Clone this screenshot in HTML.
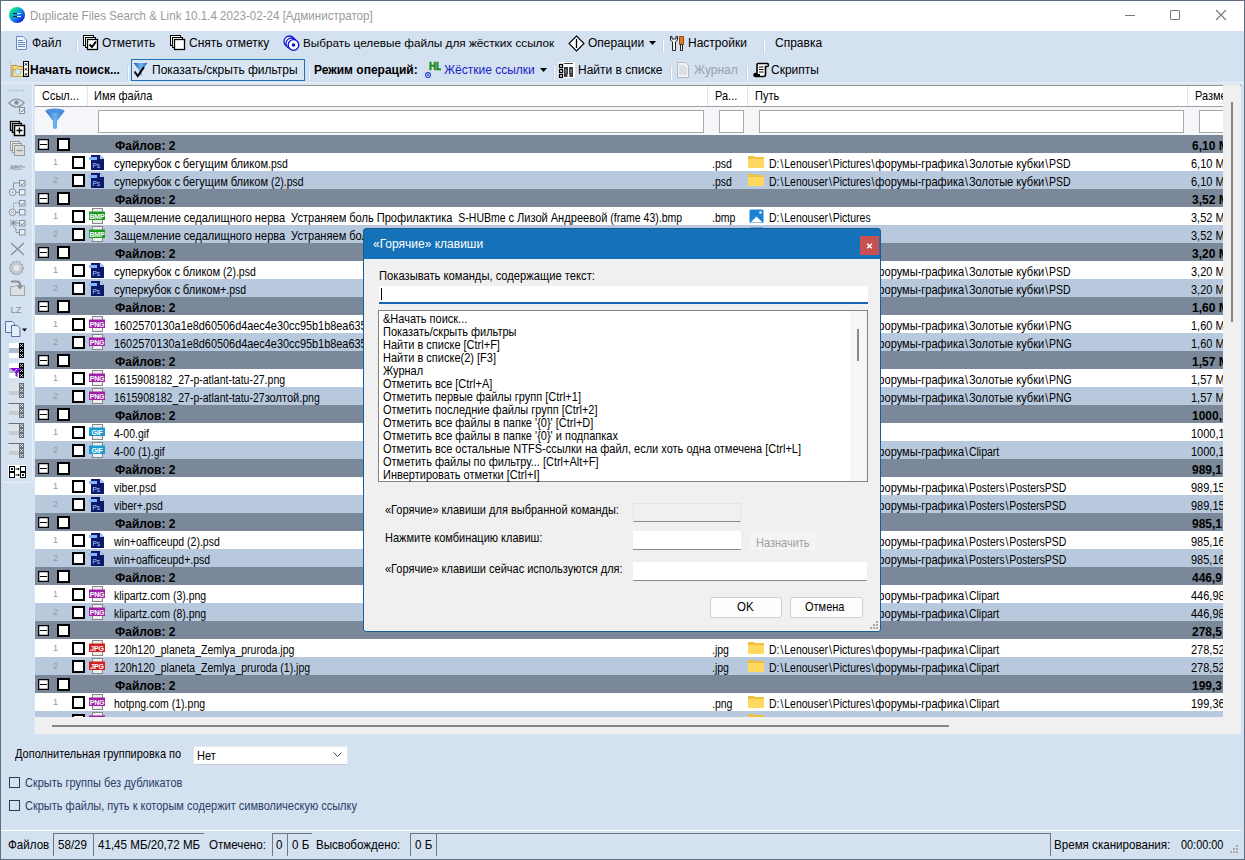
<!DOCTYPE html><html><head><meta charset="utf-8"><style>
*{box-sizing:border-box;margin:0;padding:0}
html,body{width:1245px;height:860px;overflow:hidden}
body{position:relative;background:#d4e1f0;font-family:"Liberation Sans",sans-serif;font-size:12px;color:#000}
.a{position:absolute;white-space:nowrap}
.t{position:absolute;white-space:nowrap;line-height:14px}
.vs{position:absolute;width:2px;height:14px;margin-top:4px;border-left:1px solid #c8d4e0;border-right:1px solid #f8fbff}
.row{position:absolute;left:35px;width:1188px;height:18px;overflow:hidden}
.g{background:#7b8899}
.w{background:#fff}
.b{background:#b8c9de}
.cb{position:absolute;width:13px;height:13px;border:2px solid #000;background:#fff}
.col{position:absolute;top:1px;width:11px;height:11px;border:1px solid #000;box-shadow:inset 0 0 0 .3px #000;background:#fff}
.col:after{content:"";position:absolute;left:1px;top:3.5px;width:7px;height:1.6px;background:#000}
.rt{position:absolute;top:4px;line-height:14px;font-size:11px;white-space:pre;transform:scaleY(1.13);transform-origin:0 10.8px}
.gt{position:absolute;top:4px;line-height:14px;font-size:12px;font-weight:bold;white-space:nowrap}
.num{position:absolute;left:18px;top:3px;font-size:9px;color:#999;line-height:12px}
.fi{position:absolute;left:54px;top:1px;width:16px;height:16px}
.fo{position:absolute;left:713px;top:1px;width:16px;height:16px}
.dl{position:absolute;white-space:nowrap;line-height:13px;font-size:11px;transform:scaleY(1.13);transform-origin:0 10.3px}
</style></head><body>
<div class="a" style="left:0;top:0;width:1245px;height:31px;background:#fff"></div>
<div class="a" style="left:9px;top:7px;width:16px;height:16px;border-radius:50%;background:linear-gradient(135deg,#00f080 15%,#1890e0 50%,#1020e0 85%)"></div>
<div class="a" style="left:13px;top:13px;width:4px;height:1px;background:#123"></div><div class="a" style="left:13px;top:16px;width:4px;height:1px;background:#123"></div><div class="a" style="left:17px;top:13px;width:4px;height:1px;background:#cff"></div><div class="a" style="left:17px;top:16px;width:4px;height:1px;background:#cff"></div>
<div class="t" style="left:30px;top:8.7px;color:#9a9a9a;font-size:11.6px;transform:scaleY(1.15);transform-origin:0 11px">Duplicate Files Search &amp; Link 10.1.4 2023-02-24 [Администратор]</div>
<div class="a" style="left:1125px;top:15px;width:10px;height:1px;background:#777"></div>
<div class="a" style="left:1170px;top:10px;width:10px;height:10px;border:1px solid #777;border-radius:1px"></div>
<svg class="a" style="left:1215px;top:9px" width="12" height="12"><path d="M1 1L11 11M11 1L1 11" stroke="#777" stroke-width="1.1"/></svg>
<svg class="a" style="left:15px;top:36px" width="12" height="14" viewBox="0 0 12 14"><path d="M1.5 .5H8L11.5 4V13.5H1.5Z" fill="#eef4fc" stroke="#6a88c8"/><path d="M3 4.5H8M3 6.5H10M3 8.5H10M3 10.5H10" stroke="#6a88c8"/></svg>
<div class="t" style="left:32px;top:36px">Файл</div>
<div class="vs" style="left:76px;top:35px"></div>
<svg class="a" style="left:83px;top:35px" width="16" height="16" viewBox="0 0 16 16"><rect x="0.5" y="0.5" width="10" height="10" fill="#fff" stroke="#000"/><rect x="2.5" y="2.5" width="10" height="10" fill="#fff" stroke="#000"/><rect x="4.5" y="4.5" width="10" height="10" fill="#fff" stroke="#000" stroke-width="1.3"/><path d="M6.5 9.5L9 12L13 6.5" stroke="#000" stroke-width="2" fill="none"/></svg>
<div class="t" style="left:102px;top:36px">Отметить</div>
<svg class="a" style="left:170px;top:35px" width="16" height="16" viewBox="0 0 16 16"><rect x="0.5" y="0.5" width="10" height="10" fill="#fff" stroke="#000"/><rect x="2.5" y="2.5" width="10" height="10" fill="#fff" stroke="#000"/><rect x="4.5" y="4.5" width="10" height="10" fill="#fff" stroke="#000" stroke-width="1.3"/></svg>
<div class="t" style="left:189px;top:36px">Снять отметку</div>
<svg class="a" style="left:283px;top:35px" width="18" height="17" viewBox="0 0 18 17"><circle cx="6.5" cy="6.5" r="5.5" fill="#fff" stroke="#0a14d0" stroke-width="1.3"/><circle cx="8.5" cy="8.5" r="5.5" fill="#fff" stroke="#0a14d0" stroke-width="1.3"/><circle cx="10.5" cy="10" r="5.3" fill="#fff" stroke="#0a14d0" stroke-width="1.3"/><circle cx="10.5" cy="10" r="1.8" fill="#0a14d0"/></svg>
<div class="t" style="left:303px;top:36px;font-size:11.75px">Выбрать целевые файлы для жёстких ссылок</div>
<svg class="a" style="left:568px;top:35px" width="17" height="17" viewBox="0 0 17 17"><path d="M8.5 1L16 8.5L8.5 16L1 8.5Z" fill="#fff" stroke="#000" stroke-width="1.1"/><path d="M8.5 4V13" stroke="#000" stroke-width="1.3"/></svg>
<div class="t" style="left:588px;top:36px">Операции</div>
<svg class="a" style="left:649px;top:41px" width="7" height="4" viewBox="0 0 7 4"><path d="M0 0H7L3.5 4Z" fill="#000"/></svg>
<div class="vs" style="left:662px;top:35px"></div>
<svg class="a" style="left:669px;top:35px" width="16" height="17" viewBox="0 0 16 17"><path d="M1.5 1.5V5L3.5 7V15.5H6.5V7L8.5 5V1.5H7V4H3V1.5Z" fill="#f2f2f2" stroke="#222"/><path d="M10.5 1.5H14.5V9.5H10.5Z" fill="#e07a20" stroke="#8a4a10"/><path d="M11.5 9.5H13.5V15.5H11.5Z" fill="#f4f4f4" stroke="#222"/></svg>
<div class="t" style="left:688px;top:36px">Настройки</div>
<div class="vs" style="left:763px;top:35px"></div>
<div class="t" style="left:775px;top:36px">Справка</div>
<div class="a" style="left:10px;top:62px;width:1px;height:16px;background:#b4c2d2"></div>
<svg class="a" style="left:11px;top:61px" width="18" height="17" viewBox="0 0 18 17"><path d="M1 4.5H6L7 5.5H13V15.5H1Z" fill="#f4d878" stroke="#b89028"/><path d="M2.5 8.5H13.5L12.5 15.5H1.5Z" fill="#f8e8a8" stroke="#c8a040"/><circle cx="7" cy="11" r="3" fill="#d0ecf8" stroke="#90b8d0" stroke-width=".7"/><rect x="12.5" y=".5" width="5" height="15" fill="#fff" stroke="#000"/><path d="M13.8 2.2l2.4 2.4m0-2.4l-2.4 2.4M13.8 7.2l2.4 2.4m0-2.4l-2.4 2.4M13.8 12.2l2.4 2.4m0-2.4l-2.4 2.4" stroke="#000" stroke-width=".9"/></svg>
<div class="t" style="left:30px;top:63px;font-weight:bold">Начать поиск...</div>
<div class="vs" style="left:127px;top:62px"></div>
<div class="a" style="left:131px;top:59px;width:174px;height:22px;border:1px solid #2070b8;background:#d9e7f5"></div>
<svg class="a" style="left:133px;top:62px" width="15" height="16" viewBox="0 0 15 16"><defs><linearGradient id="tg" x1="0" y1="0" x2="1" y2="0"><stop offset="0" stop-color="#1a58b8"/><stop offset=".55" stop-color="#7ab8f0"/><stop offset="1" stop-color="#1a58b8"/></linearGradient></defs><path d="M.5 1H14.5L9 8V14L6 12.5V8Z" fill="url(#tg)"/><path d="M1.5 9.5L4.8 14L11 5" stroke="#000" stroke-width="2" fill="none"/></svg>
<div class="t" style="left:152px;top:63px">Показать/скрыть фильтры</div>
<div class="vs" style="left:308px;top:62px"></div>
<div class="t" style="left:314px;top:63px;font-weight:bold">Режим операций:</div>
<svg class="a" style="left:425px;top:61px" width="16" height="17" viewBox="0 0 16 17"><text x="4" y="9" font-family="Liberation Sans" font-size="10" font-weight="bold" fill="#188a18" stroke="#188a18" stroke-width=".5" letter-spacing="-.3">HL</text><circle cx="3" cy="14" r="2.4" fill="#fff" stroke="#1a3ad0" stroke-width="1.1"/><circle cx="3" cy="14" r="1" fill="#1a3ad0"/></svg>
<div class="t" style="left:444px;top:63px;color:#1a22c8">Жёсткие ссылки</div>
<svg class="a" style="left:540px;top:68px" width="7" height="4" viewBox="0 0 7 4"><path d="M0 0H7L3.5 4Z" fill="#000"/></svg>
<div class="vs" style="left:553px;top:62px"></div>
<svg class="a" style="left:558px;top:62px" width="17" height="16" viewBox="0 0 17 16"><rect x="0" y="0" width="17" height="16" fill="#fff"/><rect x="1.5" y="2.5" width="3" height="3" fill="#fff" stroke="#000" stroke-width="1.3"/><rect x="1.5" y="7.5" width="3" height="3" fill="#fff" stroke="#000" stroke-width="1.3"/><rect x="1.5" y="12.5" width="3" height="3" fill="#fff" stroke="#000" stroke-width="1.3"/><path d="M6 1.5H15" stroke="#444"/><path d="M6 5H10V15H6ZM11 5H15V15H11Z" fill="#3a3e42"/><path d="M7 7H9V11H7ZM12 7H14V11H12Z" fill="#6a7074"/><path d="M9.5 12H11.5V15H9.5Z" fill="#fff"/></svg>
<div class="t" style="left:578px;top:63px">Найти в списке</div>
<div class="vs" style="left:670px;top:62px"></div>
<svg class="a" style="left:677px;top:62px" width="12" height="16" viewBox="0 0 12 16"><path d="M.5 .5H8.5L11.5 3.5V15.5H.5Z" fill="#f2f4f6" stroke="#b4b8bc"/><path d="M2 4H8M2 6H10M2 8H10M2 10H10M2 12H10" stroke="#c4c8cc"/></svg>
<div class="t" style="left:694px;top:63px;color:#9aa0a8">Журнал</div>
<div class="vs" style="left:746px;top:62px"></div>
<svg class="a" style="left:753px;top:62px" width="16" height="16" viewBox="0 0 16 16"><path d="M5 1.5H14Q15.5 1.5 15.5 3Q15.5 4.5 14 4.5H12.5V12.5Q12.5 14.5 10.5 14.5H2.5Q1 14.5 1 13Q1 11.5 2.5 11.5H4V3Q4 1.5 5 1.5Z" fill="#fff" stroke="#000" stroke-width="1.6"/><path d="M6 5H10.5M6 7.5H10.5M6 10H10.5" stroke="#000"/><path d="M1.5 13H7" stroke="#000" stroke-width="2"/></svg>
<div class="t" style="left:771px;top:63px">Скрипты</div>
<div class="a" style="left:1px;top:82px;width:1243px;height:1px;background:#e6f0fb"></div>
<div class="a" style="left:1px;top:83px;width:1243px;height:2px;background:#dce4ee"></div>
<svg class="a" style="left:0;top:0" width="34" height="500" viewBox="0 0 34 500"><path d="M7.5 90.5h1M10.5 90.5h1M13.5 90.5h1M16.5 90.5h1M19.5 90.5h1M22.5 90.5h1" stroke="#9aa6b4" stroke-width="1.5"/><path d="M9 103Q16.5 95 24 103Q16.5 111 9 103Z" fill="none" stroke="#8a8f96" stroke-width="1.2"/><circle cx="16.5" cy="102.5" r="2.2" fill="#8a8f96"/><rect x="19.5" y="107.5" width="5" height="6" fill="#e8eef4" stroke="#8a8f96"/><path d="M20.5 110.5l1.5 1.5l2-3" stroke="#8a8f96" fill="none"/><rect x="10.5" y="121.5" width="9" height="9" fill="#fff" stroke="#000" stroke-width="1.3"/><rect x="12.5" y="123.5" width="9" height="9" fill="#fff" stroke="#000" stroke-width="1.3"/><rect x="14.5" y="125.5" width="10" height="10" fill="#fff" stroke="#000" stroke-width="1.5"/><path d="M16.5 130.5h6M19.5 127.5v6" stroke="#000" stroke-width="1.4"/><rect x="10.5" y="141.5" width="9" height="9" fill="#eee" stroke="#999"/><rect x="12.5" y="143.5" width="9" height="9" fill="#e6e6e6" stroke="#999"/><rect x="14.5" y="145.5" width="10" height="10" fill="#ddd" stroke="#999"/><path d="M16.5 150.5h6" stroke="#999" stroke-width="1.4"/><text x="10" y="169.5" font-family="Liberation Sans" font-size="6.5" fill="#8a8f96" letter-spacing="-.3">ABC</text><path d="M10 167h15" stroke="#8a8f96" stroke-width=".8"/><rect x="19.5" y="180.5" width="5.5" height="5.5" fill="#e8eef4" stroke="#8a8f96"/><path d="M20.5 183.5l1.5 1.5l2.5-3" stroke="#8a8f96" fill="none"/><rect x="19.5" y="189.5" width="5.5" height="5.5" fill="#e8eef4" stroke="#8a8f96"/><path d="M19 183.0H13.5V188.5" stroke="#8a8f96" fill="none"/><circle cx="12.5" cy="192.3" r="3.3" fill="#e8eef4" stroke="#8a8f96"/><circle cx="12.5" cy="192.3" r="1" fill="#8a8f96"/><path d="M16 192.3H19" stroke="#8a8f96"/><rect x="19.5" y="200.5" width="5.5" height="5.5" fill="#e8eef4" stroke="#8a8f96"/><path d="M20.5 203.5l1.5 1.5l2.5-3" stroke="#8a8f96" fill="none"/><rect x="19.5" y="209.5" width="5.5" height="5.5" fill="#e8eef4" stroke="#8a8f96"/><path d="M19 203.0H13.5V208.5" stroke="#8a8f96" stroke-dasharray="1.5 1" fill="none"/><circle cx="12.5" cy="212.3" r="3.3" fill="#e8eef4" stroke="#8a8f96"/><path d="M11.5 211.3l2 2m0-2l-2 2" stroke="#8a8f96"/><path d="M16 212.3H19" stroke="#8a8f96"/><rect x="19.5" y="220.5" width="5.5" height="5.5" fill="#e8eef4" stroke="#8a8f96"/><path d="M20.5 223.5l1.5 1.5l2.5-3" stroke="#8a8f96" fill="none"/><rect x="19.5" y="229.5" width="5.5" height="5.5" fill="#e8eef4" stroke="#8a8f96"/><path d="M10 220.0L17 226.0M10 226.0L17 220.0M13.5 220.0V226.0M10 223.0H19" stroke="#8a8f96" fill="none"/><path d="M13.5 226.0L16 229.0V232.5H19" stroke="#8a8f96" fill="none"/><path d="M11 243L24 255M24 243L11 255" stroke="#8a8f96" stroke-width="1.3"/><circle cx="16.5" cy="268" r="6.5" fill="#c8ccd0" stroke="#a0a4a8" stroke-dasharray="2 1.2" stroke-width="1.6"/><circle cx="16.5" cy="268" r="3" fill="#e6e8ea"/><path d="M10.5 286.5h4l1 -1h9v10h-14z" fill="#dde0e3" stroke="#a0a4a8"/><path d="M11 281.5h6q3 0 3 3v3" stroke="#8a8f96" stroke-width="2" fill="none"/><path d="M17 286l3 3.5l3-3.5z" fill="#8a8f96"/><text x="10.5" y="312.5" font-family="Liberation Sans" font-size="9.5" fill="#8a8f96">LZ</text><path d="M5.5 321.5h7l2 2v9h-9z" fill="#e4eefa" stroke="#5a70a8"/><path d="M11.5 325.5h6l2.5 2.5v8.5h-8.5z" fill="#e4eefa" stroke="#5a70a8"/><path d="M22 328.5h5l-2.5 3z" fill="#000"/><rect x="9" y="343" width="10" height="5" fill="#fff"/><rect x="9" y="348" width="10" height="5" fill="#b0bcd0"/><rect x="9" y="353" width="10" height="5" fill="#fff"/><rect x="19" y="343" width="5" height="15" fill="#000"/><path d="M20.2 344.2l2.6 2.6m0-2.6l-2.6 2.6" stroke="#fff" stroke-width=".9"/><path d="M20.2 349.2l2.6 2.6m0-2.6l-2.6 2.6" stroke="#fff" stroke-width=".9"/><path d="M20.2 354.2l2.6 2.6m0-2.6l-2.6 2.6" stroke="#fff" stroke-width=".9"/><rect x="9" y="363" width="10" height="5" fill="#fff"/><rect x="9" y="368" width="10" height="5" fill="#b0bcd0"/><rect x="9" y="373" width="10" height="5" fill="#fff"/><rect x="19" y="363" width="5" height="15" fill="#000"/><path d="M20.2 364.2l2.6 2.6m0-2.6l-2.6 2.6" stroke="#fff" stroke-width=".9"/><path d="M20.2 369.2l2.6 2.6m0-2.6l-2.6 2.6" stroke="#fff" stroke-width=".9"/><path d="M20.2 374.2l2.6 2.6m0-2.6l-2.6 2.6" stroke="#fff" stroke-width=".9"/><path d="M10 368H22L17.5 373V377L15.5 376V373Z" fill="#8010d8"/><path d="M14 372l3-3" stroke="#fff" stroke-width=".8"/><rect x="9" y="383" width="10" height="15" fill="#dde3ea"/><rect x="9" y="391" width="10" height="4" fill="#c6ccd4"/><rect x="19" y="383" width="5" height="15" fill="#6a7078"/><path d="M20.2 384.2l2.6 2.6m0-2.6l-2.6 2.6" stroke="#fff" stroke-width=".9"/><path d="M20.2 389.2l2.6 2.6m0-2.6l-2.6 2.6" stroke="#fff" stroke-width=".9"/><path d="M20.2 394.2l2.6 2.6m0-2.6l-2.6 2.6" stroke="#fff" stroke-width=".9"/><rect x="9" y="403" width="10" height="15" fill="#dde3ea"/><rect x="9" y="411" width="10" height="4" fill="#c6ccd4"/><rect x="19" y="403" width="5" height="15" fill="#6a7078"/><path d="M20.2 404.2l2.6 2.6m0-2.6l-2.6 2.6" stroke="#fff" stroke-width=".9"/><path d="M20.2 409.2l2.6 2.6m0-2.6l-2.6 2.6" stroke="#fff" stroke-width=".9"/><path d="M20.2 414.2l2.6 2.6m0-2.6l-2.6 2.6" stroke="#fff" stroke-width=".9"/><path d="M8.5 403.5H24" stroke="#6a7078"/><rect x="9" y="423" width="10" height="15" fill="#dde3ea"/><rect x="9" y="431" width="10" height="4" fill="#c6ccd4"/><rect x="19" y="423" width="5" height="15" fill="#6a7078"/><path d="M20.2 424.2l2.6 2.6m0-2.6l-2.6 2.6" stroke="#fff" stroke-width=".9"/><path d="M20.2 429.2l2.6 2.6m0-2.6l-2.6 2.6" stroke="#fff" stroke-width=".9"/><path d="M20.2 434.2l2.6 2.6m0-2.6l-2.6 2.6" stroke="#fff" stroke-width=".9"/><path d="M8.5 423.5H24" stroke="#6a7078"/><rect x="9" y="443" width="10" height="15" fill="#dde3ea"/><rect x="9" y="451" width="10" height="4" fill="#c6ccd4"/><rect x="19" y="443" width="5" height="15" fill="#6a7078"/><path d="M20.2 444.2l2.6 2.6m0-2.6l-2.6 2.6" stroke="#fff" stroke-width=".9"/><path d="M20.2 449.2l2.6 2.6m0-2.6l-2.6 2.6" stroke="#fff" stroke-width=".9"/><path d="M20.2 454.2l2.6 2.6m0-2.6l-2.6 2.6" stroke="#fff" stroke-width=".9"/><path d="M8.5 443.5H24" stroke="#6a7078"/><rect x="8" y="465" width="18" height="13" fill="#fff"/><rect x="9.5" y="466.5" width="5" height="5" fill="#fff" stroke="#000"/><path d="M11 468l2 2m0-2l-2 2" stroke="#000" stroke-width=".9"/><path d="M15.5 469h2.5" stroke="#000"/><path d="M18 467.5l1.8 1.5l-1.8 1.5z" fill="#000"/><rect x="20.5" y="466.5" width="5" height="5" fill="#fff" stroke="#000"/><rect x="9.5" y="472.5" width="5" height="5" fill="#fff" stroke="#000"/><path d="M15.5 475h2.5" stroke="#000"/><path d="M18 473.5l1.8 1.5l-1.8 1.5z" fill="#000"/><rect x="20.5" y="472.5" width="5" height="5" fill="#fff" stroke="#000"/><path d="M22 474l2 2m0-2l-2 2" stroke="#000" stroke-width=".9"/></svg>
<div class="a" style="left:3px;top:84px;width:30px;height:399px;border-right:1px solid #e9f0f8;border-bottom:1px solid #e9f0f8;border-radius:0 0 4px 0"></div>
<div class="a" style="left:34px;top:85px;width:1207px;height:649px;background:#f0f0f0;border-top:1px solid #909498;border-left:1px solid #dde7f2"></div>
<div class="a" style="left:35px;top:86px;width:1188px;height:21px;background:#fff;border-bottom:1px solid #a0a0a0"></div>
<div class="a" style="left:87px;top:86px;width:1px;height:20px;background:#e4e4e4"></div>
<div class="a" style="left:707px;top:86px;width:1px;height:20px;background:#e4e4e4"></div>
<div class="a" style="left:747px;top:86px;width:1px;height:20px;background:#e4e4e4"></div>
<div class="a" style="left:1187px;top:86px;width:1px;height:20px;background:#e4e4e4"></div>
<div class="t" style="left:42px;top:89px;font-size:11px;transform:scaleY(1.13);transform-origin:0 10.8px;">Ссыл...</div>
<div class="t" style="left:94px;top:89px;font-size:11px;transform:scaleY(1.13);transform-origin:0 10.8px;">Имя файла</div>
<div class="t" style="left:715px;top:89px;font-size:11px;transform:scaleY(1.13);transform-origin:0 10.8px;">Ра...</div>
<div class="t" style="left:755px;top:89px;font-size:11px;transform:scaleY(1.13);transform-origin:0 10.8px;">Путь</div>
<div class="t" style="left:1195px;top:89px;font-size:11px;transform:scaleY(1.13);transform-origin:0 10.8px;">Размер</div>
<div class="a" style="left:35px;top:107px;width:1188px;height:28px;background:#f4f6f9"></div>
<svg class="a" style="left:45px;top:108px" width="20" height="22" viewBox="0 0 20 22"><defs><linearGradient id="fg" x1="0" y1="0" x2="1" y2="0"><stop offset="0" stop-color="#2a6cc8"/><stop offset=".5" stop-color="#6ab4f0"/><stop offset="1" stop-color="#2a6cc8"/></linearGradient></defs><ellipse cx="10" cy="3" rx="9.5" ry="2.5" fill="#4a94e0"/><path d="M.5 3Q10 7 19.5 3L12 13V20Q10 22 8 20V13Z" fill="url(#fg)"/></svg>
<div class="a" style="left:98px;top:110px;width:606px;height:23px;background:#fff;border:1px solid #a8a8a8"></div>
<div class="a" style="left:719px;top:110px;width:25px;height:23px;background:#fff;border:1px solid #a8a8a8"></div>
<div class="a" style="left:759px;top:110px;width:425px;height:23px;background:#fff;border:1px solid #a8a8a8"></div>
<div class="a" style="left:1199px;top:110px;width:41px;height:23px;background:#fff;border:1px solid #a8a8a8"></div>
<div class="row g" style="top:135px"><div class="col" style="left:3px;top:4px"></div><div class="cb" style="left:22px;top:3px"></div><div class="gt" style="left:80px">Файлов: 2</div><div class="gt" style="left:1157px">6,10 МБ</div></div>
<div class="row w" style="top:153px"><div class="num">1</div><div class="cb" style="left:37px;top:3px"></div><svg class="fi" viewBox="0 0 16 16"><path d="M2 1H11L15 5V16H2Z" fill="#0c1a6e"/><path d="M11 1V5H15Z" fill="#b8c8f0"/><rect x="0" y="3" width="8" height="3" fill="#8ab4f8"/><text x="3.5" y="13.5" font-family="Liberation Sans" font-size="6.5" fill="#b8d0ff">Ps</text></svg><div class="rt" style="left:79px;font-size:11.1px">суперкубок<span style="font-size:10.5px"> </span>с<span style="font-size:10.5px"> </span>бегущим<span style="font-size:10.5px"> </span>бликом<span style="font-size:10.5px">.psd</span></div><div class="rt" style="left:677px"><span style="font-size:10.5px">.psd</span></div><svg class="fi" style="left:713px" viewBox="0 0 16 16"><path d="M0 2H6L7 3H16V14H0Z" fill="#f0c040"/><path d="M0 5H16V14H0Z" fill="#ffd860"/></svg><div class="rt" style="left:734px;font-size:11.1px"><span style="font-size:10.5px">D:</span><span style="font-size:10.5px;padding:0 0.9px">\</span><span style="font-size:10.5px">Lenouser</span><span style="font-size:10.5px;padding:0 0.9px">\</span><span style="font-size:10.5px">Pictures</span><span style="font-size:10.5px;padding:0 0.9px">\</span>форумы<span style="font-size:10.5px">-</span>графика<span style="font-size:10.5px;padding:0 0.9px">\</span>Золотые<span style="font-size:10.5px"> </span>кубки<span style="font-size:10.5px;padding:0 0.9px">\</span><span style="font-size:10.5px">PSD</span></div><div class="rt" style="left:1156px">6,10 МБ</div></div>
<div class="row b" style="top:171px"><div class="num">2</div><div class="cb" style="left:37px;top:3px"></div><svg class="fi" viewBox="0 0 16 16"><path d="M2 1H11L15 5V16H2Z" fill="#0c1a6e"/><path d="M11 1V5H15Z" fill="#b8c8f0"/><rect x="0" y="3" width="8" height="3" fill="#8ab4f8"/><text x="3.5" y="13.5" font-family="Liberation Sans" font-size="6.5" fill="#b8d0ff">Ps</text></svg><div class="rt" style="left:79px;font-size:11.1px">суперкубок<span style="font-size:10.5px"> </span>с<span style="font-size:10.5px"> </span>бегущим<span style="font-size:10.5px"> </span>бликом<span style="font-size:10.5px"> (2).psd</span></div><div class="rt" style="left:677px"><span style="font-size:10.5px">.psd</span></div><svg class="fi" style="left:713px" viewBox="0 0 16 16"><path d="M0 2H6L7 3H16V14H0Z" fill="#f0c040"/><path d="M0 5H16V14H0Z" fill="#ffd860"/></svg><div class="rt" style="left:734px;font-size:11.1px"><span style="font-size:10.5px">D:</span><span style="font-size:10.5px;padding:0 0.9px">\</span><span style="font-size:10.5px">Lenouser</span><span style="font-size:10.5px;padding:0 0.9px">\</span><span style="font-size:10.5px">Pictures</span><span style="font-size:10.5px;padding:0 0.9px">\</span>форумы<span style="font-size:10.5px">-</span>графика<span style="font-size:10.5px;padding:0 0.9px">\</span>Золотые<span style="font-size:10.5px"> </span>кубки<span style="font-size:10.5px;padding:0 0.9px">\</span><span style="font-size:10.5px">PSD</span></div><div class="rt" style="left:1156px">6,10 МБ</div></div>
<div class="row g" style="top:189px"><div class="col" style="left:3px;top:4px"></div><div class="cb" style="left:22px;top:3px"></div><div class="gt" style="left:80px">Файлов: 2</div><div class="gt" style="left:1157px">3,52 МБ</div></div>
<div class="row w" style="top:207px"><div class="num">1</div><div class="cb" style="left:37px;top:3px"></div><svg class="fi" viewBox="0 0 16 16"><rect x="3.5" y=".5" width="10" height="15" fill="#eee" stroke="#888"/><rect x="0" y="3.5" width="16" height="8.5" fill="#1a9a20"/><text x="8" y="10.6" text-anchor="middle" font-family="Liberation Sans" font-size="7" font-weight="bold" fill="#fff" letter-spacing="-.2">BMP</text></svg><div class="rt" style="left:79px;font-size:11.1px">Защемление<span style="font-size:10.5px"> </span>седалищного<span style="font-size:10.5px"> </span>нерва<span style="font-size:10.5px">  </span>Устраняем<span style="font-size:10.5px"> </span>боль<span style="font-size:10.5px"> </span>Профилактика<span style="font-size:10.5px">  S-HUBme </span>с<span style="font-size:10.5px"> </span>Лизой<span style="font-size:10.5px"> </span>Андреевой<span style="font-size:10.5px"> (frame 43).bmp</span></div><div class="rt" style="left:677px"><span style="font-size:10.5px">.bmp</span></div><svg class="fi" style="left:714px" viewBox="0 0 16 16"><rect x=".5" y="1.5" width="14" height="13.5" rx="1.5" fill="#1a82d4"/><path d="M1.5 14.5L7.5 8.5L13.5 14.5Z" fill="#fff"/><circle cx="11.5" cy="4.5" r="1.3" fill="#e8f4ff"/></svg><div class="rt" style="left:734px;font-size:11.1px"><span style="font-size:10.5px">D:</span><span style="font-size:10.5px;padding:0 0.9px">\</span><span style="font-size:10.5px">Lenouser</span><span style="font-size:10.5px;padding:0 0.9px">\</span><span style="font-size:10.5px">Pictures</span></div><div class="rt" style="left:1156px">3,52 МБ</div></div>
<div class="row b" style="top:225px"><div class="num">2</div><div class="cb" style="left:37px;top:3px"></div><svg class="fi" viewBox="0 0 16 16"><rect x="3.5" y=".5" width="10" height="15" fill="#eee" stroke="#888"/><rect x="0" y="3.5" width="16" height="8.5" fill="#1a9a20"/><text x="8" y="10.6" text-anchor="middle" font-family="Liberation Sans" font-size="7" font-weight="bold" fill="#fff" letter-spacing="-.2">BMP</text></svg><div class="rt" style="left:79px;font-size:11.1px">Защемление<span style="font-size:10.5px"> </span>седалищного<span style="font-size:10.5px"> </span>нерва<span style="font-size:10.5px">  </span>Устраняем<span style="font-size:10.5px"> </span>боль<span style="font-size:10.5px"> </span>Профилактика<span style="font-size:10.5px">  S-HUBme </span>с<span style="font-size:10.5px"> </span>Лизой<span style="font-size:10.5px"> </span>Андреевой<span style="font-size:10.5px"> (frame 43).bmp</span></div><div class="rt" style="left:677px"><span style="font-size:10.5px">.bmp</span></div><svg class="fi" style="left:714px" viewBox="0 0 16 16"><rect x=".5" y="1.5" width="14" height="13.5" rx="1.5" fill="#1a82d4"/><path d="M1.5 14.5L7.5 8.5L13.5 14.5Z" fill="#fff"/><circle cx="11.5" cy="4.5" r="1.3" fill="#e8f4ff"/></svg><div class="rt" style="left:734px;font-size:11.1px"><span style="font-size:10.5px">D:</span><span style="font-size:10.5px;padding:0 0.9px">\</span><span style="font-size:10.5px">Lenouser</span><span style="font-size:10.5px;padding:0 0.9px">\</span><span style="font-size:10.5px">Pictures</span></div><div class="rt" style="left:1156px">3,52 МБ</div></div>
<div class="row g" style="top:243px"><div class="col" style="left:3px;top:4px"></div><div class="cb" style="left:22px;top:3px"></div><div class="gt" style="left:80px">Файлов: 2</div><div class="gt" style="left:1157px">3,20 МБ</div></div>
<div class="row w" style="top:261px"><div class="num">1</div><div class="cb" style="left:37px;top:3px"></div><svg class="fi" viewBox="0 0 16 16"><path d="M2 1H11L15 5V16H2Z" fill="#0c1a6e"/><path d="M11 1V5H15Z" fill="#b8c8f0"/><rect x="0" y="3" width="8" height="3" fill="#8ab4f8"/><text x="3.5" y="13.5" font-family="Liberation Sans" font-size="6.5" fill="#b8d0ff">Ps</text></svg><div class="rt" style="left:79px;font-size:11.1px">суперкубок<span style="font-size:10.5px"> </span>с<span style="font-size:10.5px"> </span>бликом<span style="font-size:10.5px"> (2).psd</span></div><div class="rt" style="left:677px"><span style="font-size:10.5px">.psd</span></div><svg class="fi" style="left:713px" viewBox="0 0 16 16"><path d="M0 2H6L7 3H16V14H0Z" fill="#f0c040"/><path d="M0 5H16V14H0Z" fill="#ffd860"/></svg><div class="rt" style="left:734px;font-size:11.1px"><span style="font-size:10.5px">D:</span><span style="font-size:10.5px;padding:0 0.9px">\</span><span style="font-size:10.5px">Lenouser</span><span style="font-size:10.5px;padding:0 0.9px">\</span><span style="font-size:10.5px">Pictures</span><span style="font-size:10.5px;padding:0 0.9px">\</span>форумы<span style="font-size:10.5px">-</span>графика<span style="font-size:10.5px;padding:0 0.9px">\</span>Золотые<span style="font-size:10.5px"> </span>кубки<span style="font-size:10.5px;padding:0 0.9px">\</span><span style="font-size:10.5px">PSD</span></div><div class="rt" style="left:1156px">3,20 МБ</div></div>
<div class="row b" style="top:279px"><div class="num">2</div><div class="cb" style="left:37px;top:3px"></div><svg class="fi" viewBox="0 0 16 16"><path d="M2 1H11L15 5V16H2Z" fill="#0c1a6e"/><path d="M11 1V5H15Z" fill="#b8c8f0"/><rect x="0" y="3" width="8" height="3" fill="#8ab4f8"/><text x="3.5" y="13.5" font-family="Liberation Sans" font-size="6.5" fill="#b8d0ff">Ps</text></svg><div class="rt" style="left:79px;font-size:11.1px">суперкубок<span style="font-size:10.5px"> </span>с<span style="font-size:10.5px"> </span>бликом<span style="font-size:10.5px">+.psd</span></div><div class="rt" style="left:677px"><span style="font-size:10.5px">.psd</span></div><svg class="fi" style="left:713px" viewBox="0 0 16 16"><path d="M0 2H6L7 3H16V14H0Z" fill="#f0c040"/><path d="M0 5H16V14H0Z" fill="#ffd860"/></svg><div class="rt" style="left:734px;font-size:11.1px"><span style="font-size:10.5px">D:</span><span style="font-size:10.5px;padding:0 0.9px">\</span><span style="font-size:10.5px">Lenouser</span><span style="font-size:10.5px;padding:0 0.9px">\</span><span style="font-size:10.5px">Pictures</span><span style="font-size:10.5px;padding:0 0.9px">\</span>форумы<span style="font-size:10.5px">-</span>графика<span style="font-size:10.5px;padding:0 0.9px">\</span>Золотые<span style="font-size:10.5px"> </span>кубки<span style="font-size:10.5px;padding:0 0.9px">\</span><span style="font-size:10.5px">PSD</span></div><div class="rt" style="left:1156px">3,20 МБ</div></div>
<div class="row g" style="top:297px"><div class="col" style="left:3px;top:4px"></div><div class="cb" style="left:22px;top:3px"></div><div class="gt" style="left:80px">Файлов: 2</div><div class="gt" style="left:1157px">1,60 МБ</div></div>
<div class="row w" style="top:315px"><div class="num">1</div><div class="cb" style="left:37px;top:3px"></div><svg class="fi" viewBox="0 0 16 16"><rect x="3.5" y=".5" width="10" height="15" fill="#eee" stroke="#888"/><rect x="0" y="3.5" width="16" height="8.5" fill="#a020a8"/><text x="8" y="10.6" text-anchor="middle" font-family="Liberation Sans" font-size="7" font-weight="bold" fill="#fff" letter-spacing="-.2">PNG</text></svg><div class="rt" style="left:79px;font-size:11.1px"><span style="font-size:10.9px">1602570130a1e8d60506d4aec4e30cc95b1b8ea635.png</span></div><div class="rt" style="left:677px"><span style="font-size:10.5px">.png</span></div><svg class="fi" style="left:713px" viewBox="0 0 16 16"><path d="M0 2H6L7 3H16V14H0Z" fill="#f0c040"/><path d="M0 5H16V14H0Z" fill="#ffd860"/></svg><div class="rt" style="left:734px;font-size:11.1px"><span style="font-size:10.5px">D:</span><span style="font-size:10.5px;padding:0 0.9px">\</span><span style="font-size:10.5px">Lenouser</span><span style="font-size:10.5px;padding:0 0.9px">\</span><span style="font-size:10.5px">Pictures</span><span style="font-size:10.5px;padding:0 0.9px">\</span>форумы<span style="font-size:10.5px">-</span>графика<span style="font-size:10.5px;padding:0 0.9px">\</span>Золотые<span style="font-size:10.5px"> </span>кубки<span style="font-size:10.5px;padding:0 0.9px">\</span><span style="font-size:10.5px">PNG</span></div><div class="rt" style="left:1156px">1,60 МБ</div></div>
<div class="row b" style="top:333px"><div class="num">2</div><div class="cb" style="left:37px;top:3px"></div><svg class="fi" viewBox="0 0 16 16"><rect x="3.5" y=".5" width="10" height="15" fill="#eee" stroke="#888"/><rect x="0" y="3.5" width="16" height="8.5" fill="#a020a8"/><text x="8" y="10.6" text-anchor="middle" font-family="Liberation Sans" font-size="7" font-weight="bold" fill="#fff" letter-spacing="-.2">PNG</text></svg><div class="rt" style="left:79px;font-size:11.1px"><span style="font-size:10.9px">1602570130a1e8d60506d4aec4e30cc95b1b8ea635 (1).png</span></div><div class="rt" style="left:677px"><span style="font-size:10.5px">.png</span></div><svg class="fi" style="left:713px" viewBox="0 0 16 16"><path d="M0 2H6L7 3H16V14H0Z" fill="#f0c040"/><path d="M0 5H16V14H0Z" fill="#ffd860"/></svg><div class="rt" style="left:734px;font-size:11.1px"><span style="font-size:10.5px">D:</span><span style="font-size:10.5px;padding:0 0.9px">\</span><span style="font-size:10.5px">Lenouser</span><span style="font-size:10.5px;padding:0 0.9px">\</span><span style="font-size:10.5px">Pictures</span><span style="font-size:10.5px;padding:0 0.9px">\</span>форумы<span style="font-size:10.5px">-</span>графика<span style="font-size:10.5px;padding:0 0.9px">\</span>Золотые<span style="font-size:10.5px"> </span>кубки<span style="font-size:10.5px;padding:0 0.9px">\</span><span style="font-size:10.5px">PNG</span></div><div class="rt" style="left:1156px">1,60 МБ</div></div>
<div class="row g" style="top:351px"><div class="col" style="left:3px;top:4px"></div><div class="cb" style="left:22px;top:3px"></div><div class="gt" style="left:80px">Файлов: 2</div><div class="gt" style="left:1157px">1,57 МБ</div></div>
<div class="row w" style="top:369px"><div class="num">1</div><div class="cb" style="left:37px;top:3px"></div><svg class="fi" viewBox="0 0 16 16"><rect x="3.5" y=".5" width="10" height="15" fill="#eee" stroke="#888"/><rect x="0" y="3.5" width="16" height="8.5" fill="#a020a8"/><text x="8" y="10.6" text-anchor="middle" font-family="Liberation Sans" font-size="7" font-weight="bold" fill="#fff" letter-spacing="-.2">PNG</text></svg><div class="rt" style="left:79px;font-size:11.1px"><span style="font-size:10.5px">1615908182_27-p-atlant-tatu-27.png</span></div><div class="rt" style="left:677px"><span style="font-size:10.5px">.png</span></div><svg class="fi" style="left:713px" viewBox="0 0 16 16"><path d="M0 2H6L7 3H16V14H0Z" fill="#f0c040"/><path d="M0 5H16V14H0Z" fill="#ffd860"/></svg><div class="rt" style="left:734px;font-size:11.1px"><span style="font-size:10.5px">D:</span><span style="font-size:10.5px;padding:0 0.9px">\</span><span style="font-size:10.5px">Lenouser</span><span style="font-size:10.5px;padding:0 0.9px">\</span><span style="font-size:10.5px">Pictures</span><span style="font-size:10.5px;padding:0 0.9px">\</span>форумы<span style="font-size:10.5px">-</span>графика<span style="font-size:10.5px;padding:0 0.9px">\</span>Золотые<span style="font-size:10.5px"> </span>кубки<span style="font-size:10.5px;padding:0 0.9px">\</span><span style="font-size:10.5px">PNG</span></div><div class="rt" style="left:1156px">1,57 МБ</div></div>
<div class="row b" style="top:387px"><div class="num">2</div><div class="cb" style="left:37px;top:3px"></div><svg class="fi" viewBox="0 0 16 16"><rect x="3.5" y=".5" width="10" height="15" fill="#eee" stroke="#888"/><rect x="0" y="3.5" width="16" height="8.5" fill="#a020a8"/><text x="8" y="10.6" text-anchor="middle" font-family="Liberation Sans" font-size="7" font-weight="bold" fill="#fff" letter-spacing="-.2">PNG</text></svg><div class="rt" style="left:79px;font-size:11.1px"><span style="font-size:10.5px">1615908182_27-p-atlant-tatu-27</span>золтой<span style="font-size:10.5px">.png</span></div><div class="rt" style="left:677px"><span style="font-size:10.5px">.png</span></div><svg class="fi" style="left:713px" viewBox="0 0 16 16"><path d="M0 2H6L7 3H16V14H0Z" fill="#f0c040"/><path d="M0 5H16V14H0Z" fill="#ffd860"/></svg><div class="rt" style="left:734px;font-size:11.1px"><span style="font-size:10.5px">D:</span><span style="font-size:10.5px;padding:0 0.9px">\</span><span style="font-size:10.5px">Lenouser</span><span style="font-size:10.5px;padding:0 0.9px">\</span><span style="font-size:10.5px">Pictures</span><span style="font-size:10.5px;padding:0 0.9px">\</span>форумы<span style="font-size:10.5px">-</span>графика<span style="font-size:10.5px;padding:0 0.9px">\</span>Золотые<span style="font-size:10.5px"> </span>кубки<span style="font-size:10.5px;padding:0 0.9px">\</span><span style="font-size:10.5px">PNG</span></div><div class="rt" style="left:1156px">1,57 МБ</div></div>
<div class="row g" style="top:405px"><div class="col" style="left:3px;top:4px"></div><div class="cb" style="left:22px;top:3px"></div><div class="gt" style="left:80px">Файлов: 2</div><div class="gt" style="left:1157px">1000,1 КБ</div></div>
<div class="row w" style="top:423px"><div class="num">1</div><div class="cb" style="left:37px;top:3px"></div><svg class="fi" viewBox="0 0 16 16"><rect x="3.5" y=".5" width="10" height="15" fill="#eee" stroke="#888"/><rect x="0" y="3.5" width="16" height="8.5" fill="#1a9ad0"/><text x="8" y="10.6" text-anchor="middle" font-family="Liberation Sans" font-size="7" font-weight="bold" fill="#fff" letter-spacing="-.2">GIF</text></svg><div class="rt" style="left:79px;font-size:11.1px"><span style="font-size:10.5px">4-00.gif</span></div><div class="rt" style="left:677px"><span style="font-size:10.5px">.gif</span></div><svg class="fi" style="left:714px" viewBox="0 0 16 16"><rect x=".5" y="1.5" width="14" height="13.5" rx="1.5" fill="#1a82d4"/><path d="M1.5 14.5L7.5 8.5L13.5 14.5Z" fill="#fff"/><circle cx="11.5" cy="4.5" r="1.3" fill="#e8f4ff"/></svg><div class="rt" style="left:734px;font-size:11.1px"><span style="font-size:10.5px">D:</span><span style="font-size:10.5px;padding:0 0.9px">\</span><span style="font-size:10.5px">Lenouser</span><span style="font-size:10.5px;padding:0 0.9px">\</span><span style="font-size:10.5px">Pictures</span></div><div class="rt" style="left:1156px">1000,1 КБ</div></div>
<div class="row b" style="top:441px"><div class="num">2</div><div class="cb" style="left:37px;top:3px"></div><svg class="fi" viewBox="0 0 16 16"><rect x="3.5" y=".5" width="10" height="15" fill="#eee" stroke="#888"/><rect x="0" y="3.5" width="16" height="8.5" fill="#1a9ad0"/><text x="8" y="10.6" text-anchor="middle" font-family="Liberation Sans" font-size="7" font-weight="bold" fill="#fff" letter-spacing="-.2">GIF</text></svg><div class="rt" style="left:79px;font-size:11.1px"><span style="font-size:10.5px">4-00 (1).gif</span></div><div class="rt" style="left:677px"><span style="font-size:10.5px">.gif</span></div><svg class="fi" style="left:713px" viewBox="0 0 16 16"><path d="M0 2H6L7 3H16V14H0Z" fill="#f0c040"/><path d="M0 5H16V14H0Z" fill="#ffd860"/></svg><div class="rt" style="left:734px;font-size:11.1px"><span style="font-size:10.5px">D:</span><span style="font-size:10.5px;padding:0 0.9px">\</span><span style="font-size:10.5px">Lenouser</span><span style="font-size:10.5px;padding:0 0.9px">\</span><span style="font-size:10.5px">Pictures</span><span style="font-size:10.5px;padding:0 0.9px">\</span>форумы<span style="font-size:10.5px">-</span>графика<span style="font-size:10.5px;padding:0 0.9px">\</span><span style="font-size:10.5px">Clipart</span></div><div class="rt" style="left:1156px">1000,1 КБ</div></div>
<div class="row g" style="top:459px"><div class="col" style="left:3px;top:4px"></div><div class="cb" style="left:22px;top:3px"></div><div class="gt" style="left:80px">Файлов: 2</div><div class="gt" style="left:1157px">989,1 КБ</div></div>
<div class="row w" style="top:477px"><div class="num">1</div><div class="cb" style="left:37px;top:3px"></div><svg class="fi" viewBox="0 0 16 16"><path d="M2 1H11L15 5V16H2Z" fill="#0c1a6e"/><path d="M11 1V5H15Z" fill="#b8c8f0"/><rect x="0" y="3" width="8" height="3" fill="#8ab4f8"/><text x="3.5" y="13.5" font-family="Liberation Sans" font-size="6.5" fill="#b8d0ff">Ps</text></svg><div class="rt" style="left:79px;font-size:11.1px"><span style="font-size:10.5px">viber.psd</span></div><div class="rt" style="left:677px"><span style="font-size:10.5px">.psd</span></div><svg class="fi" style="left:713px" viewBox="0 0 16 16"><path d="M0 2H6L7 3H16V14H0Z" fill="#f0c040"/><path d="M0 5H16V14H0Z" fill="#ffd860"/></svg><div class="rt" style="left:734px;font-size:11.1px"><span style="font-size:10.5px">D:</span><span style="font-size:10.5px;padding:0 0.9px">\</span><span style="font-size:10.5px">Lenouser</span><span style="font-size:10.5px;padding:0 0.9px">\</span><span style="font-size:10.5px">Pictures</span><span style="font-size:10.5px;padding:0 0.9px">\</span>форумы<span style="font-size:10.5px">-</span>графика<span style="font-size:10.5px;padding:0 0.9px">\</span><span style="font-size:10.5px">Posters</span><span style="font-size:10.5px;padding:0 0.9px">\</span><span style="font-size:10.5px">PostersPSD</span></div><div class="rt" style="left:1156px">989,15 КБ</div></div>
<div class="row b" style="top:495px"><div class="num">2</div><div class="cb" style="left:37px;top:3px"></div><svg class="fi" viewBox="0 0 16 16"><path d="M2 1H11L15 5V16H2Z" fill="#0c1a6e"/><path d="M11 1V5H15Z" fill="#b8c8f0"/><rect x="0" y="3" width="8" height="3" fill="#8ab4f8"/><text x="3.5" y="13.5" font-family="Liberation Sans" font-size="6.5" fill="#b8d0ff">Ps</text></svg><div class="rt" style="left:79px;font-size:11.1px"><span style="font-size:10.5px">viber+.psd</span></div><div class="rt" style="left:677px"><span style="font-size:10.5px">.psd</span></div><svg class="fi" style="left:713px" viewBox="0 0 16 16"><path d="M0 2H6L7 3H16V14H0Z" fill="#f0c040"/><path d="M0 5H16V14H0Z" fill="#ffd860"/></svg><div class="rt" style="left:734px;font-size:11.1px"><span style="font-size:10.5px">D:</span><span style="font-size:10.5px;padding:0 0.9px">\</span><span style="font-size:10.5px">Lenouser</span><span style="font-size:10.5px;padding:0 0.9px">\</span><span style="font-size:10.5px">Pictures</span><span style="font-size:10.5px;padding:0 0.9px">\</span>форумы<span style="font-size:10.5px">-</span>графика<span style="font-size:10.5px;padding:0 0.9px">\</span><span style="font-size:10.5px">Posters</span><span style="font-size:10.5px;padding:0 0.9px">\</span><span style="font-size:10.5px">PostersPSD</span></div><div class="rt" style="left:1156px">989,15 КБ</div></div>
<div class="row g" style="top:513px"><div class="col" style="left:3px;top:4px"></div><div class="cb" style="left:22px;top:3px"></div><div class="gt" style="left:80px">Файлов: 2</div><div class="gt" style="left:1157px">985,1 КБ</div></div>
<div class="row w" style="top:531px"><div class="num">1</div><div class="cb" style="left:37px;top:3px"></div><svg class="fi" viewBox="0 0 16 16"><path d="M2 1H11L15 5V16H2Z" fill="#0c1a6e"/><path d="M11 1V5H15Z" fill="#b8c8f0"/><rect x="0" y="3" width="8" height="3" fill="#8ab4f8"/><text x="3.5" y="13.5" font-family="Liberation Sans" font-size="6.5" fill="#b8d0ff">Ps</text></svg><div class="rt" style="left:79px;font-size:11.1px"><span style="font-size:10.5px">win+oafficeupd (2).psd</span></div><div class="rt" style="left:677px"><span style="font-size:10.5px">.psd</span></div><svg class="fi" style="left:713px" viewBox="0 0 16 16"><path d="M0 2H6L7 3H16V14H0Z" fill="#f0c040"/><path d="M0 5H16V14H0Z" fill="#ffd860"/></svg><div class="rt" style="left:734px;font-size:11.1px"><span style="font-size:10.5px">D:</span><span style="font-size:10.5px;padding:0 0.9px">\</span><span style="font-size:10.5px">Lenouser</span><span style="font-size:10.5px;padding:0 0.9px">\</span><span style="font-size:10.5px">Pictures</span><span style="font-size:10.5px;padding:0 0.9px">\</span>форумы<span style="font-size:10.5px">-</span>графика<span style="font-size:10.5px;padding:0 0.9px">\</span><span style="font-size:10.5px">Posters</span><span style="font-size:10.5px;padding:0 0.9px">\</span><span style="font-size:10.5px">PostersPSD</span></div><div class="rt" style="left:1156px">985,16 КБ</div></div>
<div class="row b" style="top:549px"><div class="num">2</div><div class="cb" style="left:37px;top:3px"></div><svg class="fi" viewBox="0 0 16 16"><path d="M2 1H11L15 5V16H2Z" fill="#0c1a6e"/><path d="M11 1V5H15Z" fill="#b8c8f0"/><rect x="0" y="3" width="8" height="3" fill="#8ab4f8"/><text x="3.5" y="13.5" font-family="Liberation Sans" font-size="6.5" fill="#b8d0ff">Ps</text></svg><div class="rt" style="left:79px;font-size:11.1px"><span style="font-size:10.5px">win+oafficeupd+.psd</span></div><div class="rt" style="left:677px"><span style="font-size:10.5px">.psd</span></div><svg class="fi" style="left:713px" viewBox="0 0 16 16"><path d="M0 2H6L7 3H16V14H0Z" fill="#f0c040"/><path d="M0 5H16V14H0Z" fill="#ffd860"/></svg><div class="rt" style="left:734px;font-size:11.1px"><span style="font-size:10.5px">D:</span><span style="font-size:10.5px;padding:0 0.9px">\</span><span style="font-size:10.5px">Lenouser</span><span style="font-size:10.5px;padding:0 0.9px">\</span><span style="font-size:10.5px">Pictures</span><span style="font-size:10.5px;padding:0 0.9px">\</span>форумы<span style="font-size:10.5px">-</span>графика<span style="font-size:10.5px;padding:0 0.9px">\</span><span style="font-size:10.5px">Posters</span><span style="font-size:10.5px;padding:0 0.9px">\</span><span style="font-size:10.5px">PostersPSD</span></div><div class="rt" style="left:1156px">985,16 КБ</div></div>
<div class="row g" style="top:567px"><div class="col" style="left:3px;top:4px"></div><div class="cb" style="left:22px;top:3px"></div><div class="gt" style="left:80px">Файлов: 2</div><div class="gt" style="left:1157px">446,9 КБ</div></div>
<div class="row w" style="top:585px"><div class="num">1</div><div class="cb" style="left:37px;top:3px"></div><svg class="fi" viewBox="0 0 16 16"><rect x="3.5" y=".5" width="10" height="15" fill="#eee" stroke="#888"/><rect x="0" y="3.5" width="16" height="8.5" fill="#a020a8"/><text x="8" y="10.6" text-anchor="middle" font-family="Liberation Sans" font-size="7" font-weight="bold" fill="#fff" letter-spacing="-.2">PNG</text></svg><div class="rt" style="left:79px;font-size:11.1px"><span style="font-size:10.5px">klipartz.com (3).png</span></div><div class="rt" style="left:677px"><span style="font-size:10.5px">.png</span></div><svg class="fi" style="left:713px" viewBox="0 0 16 16"><path d="M0 2H6L7 3H16V14H0Z" fill="#f0c040"/><path d="M0 5H16V14H0Z" fill="#ffd860"/></svg><div class="rt" style="left:734px;font-size:11.1px"><span style="font-size:10.5px">D:</span><span style="font-size:10.5px;padding:0 0.9px">\</span><span style="font-size:10.5px">Lenouser</span><span style="font-size:10.5px;padding:0 0.9px">\</span><span style="font-size:10.5px">Pictures</span><span style="font-size:10.5px;padding:0 0.9px">\</span>форумы<span style="font-size:10.5px">-</span>графика<span style="font-size:10.5px;padding:0 0.9px">\</span><span style="font-size:10.5px">Clipart</span></div><div class="rt" style="left:1156px">446,98 КБ</div></div>
<div class="row b" style="top:603px"><div class="num">2</div><div class="cb" style="left:37px;top:3px"></div><svg class="fi" viewBox="0 0 16 16"><rect x="3.5" y=".5" width="10" height="15" fill="#eee" stroke="#888"/><rect x="0" y="3.5" width="16" height="8.5" fill="#a020a8"/><text x="8" y="10.6" text-anchor="middle" font-family="Liberation Sans" font-size="7" font-weight="bold" fill="#fff" letter-spacing="-.2">PNG</text></svg><div class="rt" style="left:79px;font-size:11.1px"><span style="font-size:10.5px">klipartz.com (8).png</span></div><div class="rt" style="left:677px"><span style="font-size:10.5px">.png</span></div><svg class="fi" style="left:713px" viewBox="0 0 16 16"><path d="M0 2H6L7 3H16V14H0Z" fill="#f0c040"/><path d="M0 5H16V14H0Z" fill="#ffd860"/></svg><div class="rt" style="left:734px;font-size:11.1px"><span style="font-size:10.5px">D:</span><span style="font-size:10.5px;padding:0 0.9px">\</span><span style="font-size:10.5px">Lenouser</span><span style="font-size:10.5px;padding:0 0.9px">\</span><span style="font-size:10.5px">Pictures</span><span style="font-size:10.5px;padding:0 0.9px">\</span>форумы<span style="font-size:10.5px">-</span>графика<span style="font-size:10.5px;padding:0 0.9px">\</span><span style="font-size:10.5px">Clipart</span></div><div class="rt" style="left:1156px">446,98 КБ</div></div>
<div class="row g" style="top:621px"><div class="col" style="left:3px;top:4px"></div><div class="cb" style="left:22px;top:3px"></div><div class="gt" style="left:80px">Файлов: 2</div><div class="gt" style="left:1157px">278,5 КБ</div></div>
<div class="row w" style="top:639px"><div class="num">1</div><div class="cb" style="left:37px;top:3px"></div><svg class="fi" viewBox="0 0 16 16"><rect x="3.5" y=".5" width="10" height="15" fill="#eee" stroke="#888"/><rect x="0" y="3.5" width="16" height="8.5" fill="#d02020"/><text x="8" y="10.6" text-anchor="middle" font-family="Liberation Sans" font-size="7" font-weight="bold" fill="#fff" letter-spacing="-.2">JPG</text></svg><div class="rt" style="left:79px;font-size:11.1px"><span style="font-size:10.5px">120h120_planeta_Zemlya_pruroda.jpg</span></div><div class="rt" style="left:677px"><span style="font-size:10.5px">.jpg</span></div><svg class="fi" style="left:713px" viewBox="0 0 16 16"><path d="M0 2H6L7 3H16V14H0Z" fill="#f0c040"/><path d="M0 5H16V14H0Z" fill="#ffd860"/></svg><div class="rt" style="left:734px;font-size:11.1px"><span style="font-size:10.5px">D:</span><span style="font-size:10.5px;padding:0 0.9px">\</span><span style="font-size:10.5px">Lenouser</span><span style="font-size:10.5px;padding:0 0.9px">\</span><span style="font-size:10.5px">Pictures</span><span style="font-size:10.5px;padding:0 0.9px">\</span>форумы<span style="font-size:10.5px">-</span>графика<span style="font-size:10.5px;padding:0 0.9px">\</span><span style="font-size:10.5px">Clipart</span></div><div class="rt" style="left:1156px">278,52 КБ</div></div>
<div class="row b" style="top:657px"><div class="num">2</div><div class="cb" style="left:37px;top:3px"></div><svg class="fi" viewBox="0 0 16 16"><rect x="3.5" y=".5" width="10" height="15" fill="#eee" stroke="#888"/><rect x="0" y="3.5" width="16" height="8.5" fill="#d02020"/><text x="8" y="10.6" text-anchor="middle" font-family="Liberation Sans" font-size="7" font-weight="bold" fill="#fff" letter-spacing="-.2">JPG</text></svg><div class="rt" style="left:79px;font-size:11.1px"><span style="font-size:10.5px">120h120_planeta_Zemlya_pruroda (1).jpg</span></div><div class="rt" style="left:677px"><span style="font-size:10.5px">.jpg</span></div><svg class="fi" style="left:713px" viewBox="0 0 16 16"><path d="M0 2H6L7 3H16V14H0Z" fill="#f0c040"/><path d="M0 5H16V14H0Z" fill="#ffd860"/></svg><div class="rt" style="left:734px;font-size:11.1px"><span style="font-size:10.5px">D:</span><span style="font-size:10.5px;padding:0 0.9px">\</span><span style="font-size:10.5px">Lenouser</span><span style="font-size:10.5px;padding:0 0.9px">\</span><span style="font-size:10.5px">Pictures</span><span style="font-size:10.5px;padding:0 0.9px">\</span>форумы<span style="font-size:10.5px">-</span>графика<span style="font-size:10.5px;padding:0 0.9px">\</span><span style="font-size:10.5px">Clipart</span></div><div class="rt" style="left:1156px">278,52 КБ</div></div>
<div class="row g" style="top:675px"><div class="col" style="left:3px;top:4px"></div><div class="cb" style="left:22px;top:3px"></div><div class="gt" style="left:80px">Файлов: 2</div><div class="gt" style="left:1157px">199,3 КБ</div></div>
<div class="row w" style="top:693px"><div class="num">1</div><div class="cb" style="left:37px;top:3px"></div><svg class="fi" viewBox="0 0 16 16"><rect x="3.5" y=".5" width="10" height="15" fill="#eee" stroke="#888"/><rect x="0" y="3.5" width="16" height="8.5" fill="#a020a8"/><text x="8" y="10.6" text-anchor="middle" font-family="Liberation Sans" font-size="7" font-weight="bold" fill="#fff" letter-spacing="-.2">PNG</text></svg><div class="rt" style="left:79px;font-size:11.1px"><span style="font-size:10.5px">hotpng.com (1).png</span></div><div class="rt" style="left:677px"><span style="font-size:10.5px">.png</span></div><svg class="fi" style="left:713px" viewBox="0 0 16 16"><path d="M0 2H6L7 3H16V14H0Z" fill="#f0c040"/><path d="M0 5H16V14H0Z" fill="#ffd860"/></svg><div class="rt" style="left:734px;font-size:11.1px"><span style="font-size:10.5px">D:</span><span style="font-size:10.5px;padding:0 0.9px">\</span><span style="font-size:10.5px">Lenouser</span><span style="font-size:10.5px;padding:0 0.9px">\</span><span style="font-size:10.5px">Pictures</span><span style="font-size:10.5px;padding:0 0.9px">\</span>форумы<span style="font-size:10.5px">-</span>графика<span style="font-size:10.5px;padding:0 0.9px">\</span><span style="font-size:10.5px">Clipart</span></div><div class="rt" style="left:1156px">199,36 КБ</div></div>
<div class="row b" style="top:711px"><div class="num">2</div><div class="cb" style="left:37px;top:3px"></div><svg class="fi" viewBox="0 0 16 16"><rect x="3.5" y=".5" width="10" height="15" fill="#eee" stroke="#888"/><rect x="0" y="3.5" width="16" height="8.5" fill="#a020a8"/><text x="8" y="10.6" text-anchor="middle" font-family="Liberation Sans" font-size="7" font-weight="bold" fill="#fff" letter-spacing="-.2">PNG</text></svg><div class="rt" style="left:79px;font-size:11.1px"><span style="font-size:10.5px">hotpng.com (2).png</span></div><div class="rt" style="left:677px"><span style="font-size:10.5px">.png</span></div><svg class="fi" style="left:713px" viewBox="0 0 16 16"><path d="M0 2H6L7 3H16V14H0Z" fill="#f0c040"/><path d="M0 5H16V14H0Z" fill="#ffd860"/></svg><div class="rt" style="left:734px;font-size:11.1px"><span style="font-size:10.5px">D:</span><span style="font-size:10.5px;padding:0 0.9px">\</span><span style="font-size:10.5px">Lenouser</span><span style="font-size:10.5px;padding:0 0.9px">\</span><span style="font-size:10.5px">Pictures</span><span style="font-size:10.5px;padding:0 0.9px">\</span>форумы<span style="font-size:10.5px">-</span>графика<span style="font-size:10.5px;padding:0 0.9px">\</span><span style="font-size:10.5px">Clipart</span></div><div class="rt" style="left:1156px">199,36 КБ</div></div>
<div class="a" style="left:35px;top:717px;width:1205px;height:17px;background:#f0f0f0"></div>
<div class="a" style="left:52px;top:725px;width:897px;height:2px;background:#858585"></div>
<div class="a" style="left:1223px;top:85px;width:17px;height:632px;background:#f0f0f0"></div>
<div class="a" style="left:1231px;top:102px;width:2px;height:220px;background:#858585"></div>
<div class="t" style="left:15px;top:746.5px;font-size:11px;transform:scaleY(1.13);transform-origin:0 10.8px;">Дополнительная группировка по</div>
<div class="a" style="left:193px;top:746px;width:155px;height:19px;background:#fff;border:1px solid #e4e8ec;border-bottom-color:#c8ccd0;border-radius:2px"></div>
<div class="t" style="left:197px;top:749px;font-size:11px;transform:scaleY(1.13);transform-origin:0 10.8px;">Нет</div>
<svg class="a" style="left:333px;top:752px" width="9" height="6" viewBox="0 0 9 6"><path d="M.5 .5L4.5 4.5L8.5 .5" stroke="#444" fill="none"/></svg>
<div class="a" style="left:9px;top:777px;width:11px;height:11px;border:1px solid #2a3a58"></div>
<div class="t" style="left:25px;top:776px;font-size:11px;color:#2a4068;transform:scaleY(1.13);transform-origin:0 10.8px;">Скрыть группы без дубликатов</div>
<div class="a" style="left:9px;top:800px;width:11px;height:11px;border:1px solid #2a3a58"></div>
<div class="t" style="left:25px;top:799px;font-size:11px;color:#2a4068;transform:scaleY(1.13);transform-origin:0 10.8px;">Скрыть файлы, путь к которым содержит символическую ссылку</div>
<div class="a" style="left:1px;top:830px;width:1240px;height:1px;background:#fff"></div>
<div class="a" style="left:53px;top:833px;width:40px;height:23px;border-left:1px solid #6e7882;border-top:1px solid #6e7882"></div>
<div class="a" style="left:93px;top:833px;width:111px;height:23px;border-left:1px solid #6e7882;border-top:1px solid #6e7882"></div>
<div class="a" style="left:272px;top:833px;width:15px;height:23px;border-left:1px solid #6e7882;border-top:1px solid #6e7882"></div>
<div class="a" style="left:287px;top:833px;width:25px;height:23px;border-left:1px solid #6e7882;border-top:1px solid #6e7882"></div>
<div class="a" style="left:410px;top:833px;width:26px;height:23px;border-left:1px solid #6e7882;border-top:1px solid #6e7882"></div>
<div class="a" style="left:436px;top:833px;width:615px;height:23px;border-left:1px solid #6e7882;border-top:1px solid #6e7882"></div>
<div class="a" style="left:1050px;top:833px;width:1px;height:23px;background:#6e7882"></div>
<div class="t" style="left:8px;top:838px;font-size:11.6px;transform:scaleY(1.15);transform-origin:0 11px">Файлов</div>
<div class="t" style="left:58px;top:838px;font-size:11.6px;transform:scaleY(1.15);transform-origin:0 11px">58/29</div>
<div class="t" style="left:98px;top:838px;font-size:11.6px;transform:scaleY(1.15);transform-origin:0 11px">41,45 МБ/20,72 МБ</div>
<div class="t" style="left:209px;top:838px;font-size:11.6px;transform:scaleY(1.15);transform-origin:0 11px">Отмечено:</div>
<div class="t" style="left:276px;top:838px;font-size:11.6px;transform:scaleY(1.15);transform-origin:0 11px">0</div>
<div class="t" style="left:292px;top:838px;font-size:11.6px;transform:scaleY(1.15);transform-origin:0 11px">0 Б</div>
<div class="t" style="left:316px;top:838px;font-size:11.6px;transform:scaleY(1.15);transform-origin:0 11px">Высвобождено:</div>
<div class="t" style="left:415px;top:838px;font-size:11.6px;transform:scaleY(1.15);transform-origin:0 11px">0 Б</div>
<div class="t" style="left:1054px;top:838px;font-size:11.6px;transform:scaleY(1.15);transform-origin:0 11px">Время сканирования:</div>
<div class="t" style="left:1181px;top:838px;font-size:10.9px;transform:scaleY(1.15);transform-origin:0 11px">00:00:00</div>
<div class="a" style="left:363px;top:228px;width:518px;height:404px;background:#f0f0f0;border:1px solid #1a5c98;border-radius:4px 4px 3px 3px"></div>
<div class="a" style="left:363px;top:228px;width:518px;height:31px;background:#1672b8;border:1px solid #1a5c98;border-bottom:0;border-radius:4px 4px 0 0"></div>
<div class="t" style="left:373px;top:237px;color:#fff">«Горячие» клавиши</div>
<div class="a" style="left:860px;top:236px;width:19px;height:19px;background:#c85050"></div>
<svg class="a" style="left:865px;top:241px" width="9" height="9" viewBox="0 0 9 9"><path d="M2.2 2.7L6.8 7.3M6.8 2.7L2.2 7.3" stroke="#fff" stroke-width="1.5"/></svg>
<div class="dl" style="left:379px;top:269.5px;font-size:11.2px">Показывать команды, содержащие текст:</div>
<div class="a" style="left:379px;top:286px;width:489px;height:18px;background:#fff;border-bottom:2px solid #1a62b8"></div>
<div class="a" style="left:381px;top:288px;width:1px;height:12px;background:#000"></div>
<div class="a" style="left:378px;top:310px;width:490px;height:172px;background:#fff;border:1px solid #828282"></div>
<div class="a" style="left:850px;top:311px;width:17px;height:170px;background:#f6f6f6"></div>
<div class="a" style="left:857px;top:329px;width:2px;height:32px;background:#8a8a8a"></div>
<div class="dl" style="left:383px;top:313px">&amp;Начать поиск...</div>
<div class="dl" style="left:383px;top:326px">Показать/скрыть фильтры</div>
<div class="dl" style="left:383px;top:339px">Найти в списке [Ctrl+F]</div>
<div class="dl" style="left:383px;top:352px">Найти в списке(2) [F3]</div>
<div class="dl" style="left:383px;top:365px">Журнал</div>
<div class="dl" style="left:383px;top:378px">Отметить все [Ctrl+A]</div>
<div class="dl" style="left:383px;top:391px">Отметить первые файлы групп [Ctrl+1]</div>
<div class="dl" style="left:383px;top:404px">Отметить последние файлы групп [Ctrl+2]</div>
<div class="dl" style="left:383px;top:417px">Отметить все файлы в папке '{0}' [Ctrl+D]</div>
<div class="dl" style="left:383px;top:430px">Отметить все файлы в папке '{0}' и подпапках</div>
<div class="dl" style="left:383px;top:443px">Отметить все остальные NTFS-ссылки на файл, если хоть одна отмечена [Ctrl+L]</div>
<div class="dl" style="left:383px;top:456px">Отметить файлы по фильтру... [Ctrl+Alt+F]</div>
<div class="dl" style="left:383px;top:469px">Инвертировать отметки [Ctrl+I]</div>
<div class="dl" style="left:385px;top:504px">«Горячие» клавиши для выбранной команды:</div>
<div class="dl" style="left:385px;top:532px">Нажмите комбинацию клавиш:</div>
<div class="dl" style="left:385px;top:563px">«Горячие» клавиши сейчас используются для:</div>
<div class="a" style="left:633px;top:503px;width:108px;height:19px;background:#f0f0f0;border:1px solid #e4e4e4;border-bottom:1px solid #8a8a8a"></div>
<div class="a" style="left:633px;top:531px;width:108px;height:19px;background:#fff;border-bottom:1px solid #8a8a8a"></div>
<div class="a" style="left:750px;top:532px;width:67px;height:18px;background:#f4f4f4;border-radius:3px"></div>
<div class="dl" style="left:756px;top:536.5px;color:#a0a0a0">Назначить</div>
<div class="a" style="left:633px;top:562px;width:234px;height:19px;background:#fff;border-bottom:1px solid #8a8a8a"></div>
<div class="a" style="left:710px;top:597px;width:72px;height:21px;background:#fdfdfd;border:1px solid #d0d0d0;border-radius:3px"></div>
<div class="dl" style="left:737px;top:601px;font-size:11.5px">OK</div>
<div class="a" style="left:790px;top:597px;width:73px;height:21px;background:#fdfdfd;border:1px solid #d0d0d0;border-radius:3px"></div>
<div class="dl" style="left:805px;top:601px;font-size:11px">Отмена</div>
<svg class="a" style="left:870px;top:621px" width="8" height="8" viewBox="0 0 8 8"><rect x="6" y="0" width="2" height="2" fill="#a8a8a8"/><rect x="3" y="3" width="2" height="2" fill="#a8a8a8"/><rect x="6" y="3" width="2" height="2" fill="#a8a8a8"/><rect x="0" y="6" width="2" height="2" fill="#a8a8a8"/><rect x="3" y="6" width="2" height="2" fill="#a8a8a8"/><rect x="6" y="6" width="2" height="2" fill="#a8a8a8"/></svg>
<svg class="a" style="left:1230px;top:845px" width="8" height="8" viewBox="0 0 8 8"><rect x="6" y="0" width="2" height="2" fill="#a8a8a8"/><rect x="3" y="3" width="2" height="2" fill="#a8a8a8"/><rect x="6" y="3" width="2" height="2" fill="#a8a8a8"/><rect x="0" y="6" width="2" height="2" fill="#a8a8a8"/><rect x="3" y="6" width="2" height="2" fill="#a8a8a8"/><rect x="6" y="6" width="2" height="2" fill="#a8a8a8"/></svg>
<div class="a" style="left:0;top:0;width:1245px;height:860px;border:1px solid #5f6e7e"></div>
</body></html>
